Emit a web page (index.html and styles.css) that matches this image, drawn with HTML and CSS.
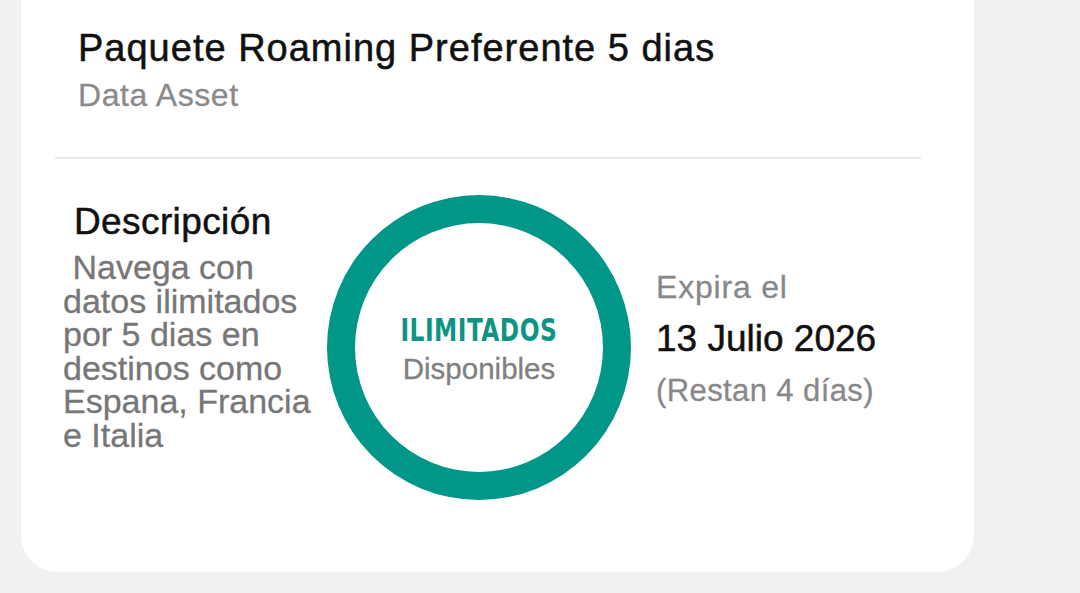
FILE: index.html
```html
<!DOCTYPE html>
<html lang="es">
<head>
<meta charset="utf-8">
<title>Paquete Roaming Preferente 5 dias</title>
<link rel="stylesheet" href="styles.css">
</head>
<body>
  <main class="card">
    <header class="head">
      <h1 class="title">Paquete Roaming Preferente 5 dias</h1>
      <p class="subtitle">Data Asset</p>
    </header>
    <hr class="divider">
    <section class="detail">
      <div class="desc">
        <h2 class="desc-title">Descripción</h2>
        <p class="desc-text">&nbsp;Navega con datos ilimitados por 5 dias en destinos como Espana, Francia e Italia</p>
      </div>
      <div class="ring">
        <span class="ring-value">ILIMITADOS</span>
        <span class="ring-label">Disponibles</span>
      </div>
      <div class="expiry">
        <p class="expiry-label">Expira el</p>
        <p class="expiry-date">13 Julio 2026</p>
        <p class="expiry-left">(Restan 4 días)</p>
      </div>
    </section>
  </main>
</body>
</html>
```
FILE: styles.css
```css
html, body {
  margin: 0;
  padding: 0;
}

body {
  background: #f1f1f1;
  font-family: "Liberation Sans", Arial, sans-serif;
  width: 1080px;
  height: 593px;
  overflow: hidden;
}

p, h1, h2 {
  margin: 0;
  font-weight: normal;
}

.card {
  margin-left: 21px;
  width: 953px;
  background: #ffffff;
  border-radius: 0 0 37px 37px;
  padding: 25px 0 72px;
  -webkit-text-stroke: 0.3px currentColor;
}

/* header */
.head {
  padding-left: 57px;
}

.title {
  font-size: 38px;
  line-height: 46px;
  letter-spacing: 1px;
  color: #111111;
  -webkit-text-stroke: 0.5px currentColor;
}

.subtitle {
  font-size: 32px;
  line-height: 48px;
  letter-spacing: 0.6px;
  color: #8a8a8a;
}

.divider {
  margin: 38px 0 0 34px;
  width: 866px;
  height: 2px;
  border: 0;
  background: #e8e8e8;
}

/* body row */
.detail {
  display: flex;
  align-items: flex-start;
  padding: 36px 0 0 42px;
}

.desc {
  width: 258px;
  margin-top: 5px;
}

.desc-title {
  font-size: 37px;
  line-height: 44px;
  letter-spacing: 0.4px;
  color: #111111;
  margin-left: 11px;
  -webkit-text-stroke: 0.5px currentColor;
}

.desc-text {
  margin-top: 7px;
  font-size: 34px;
  line-height: 33.6px;
  color: #777777;
}

.ring {
  box-sizing: border-box;
  width: 304px;
  height: 305px;
  margin-left: 6px;
  border: 28px solid #009688;
  border-radius: 50%;
  display: flex;
  flex-direction: column;
  align-items: center;
  justify-content: center;
  padding-top: 4px;
}

.ring-value {
  display: inline-block;
  font-family: "DejaVu Sans Condensed", "Liberation Sans Narrow", sans-serif;
  font-weight: bold;
  font-size: 32px;
  line-height: 38px;
  letter-spacing: 0.6px;
  color: #0e9384;
  transform: scaleX(0.81);
  -webkit-text-stroke: 0;
}

.ring-label {
  font-size: 29.5px;
  line-height: 40px;
  color: #808080;
}

.expiry {
  margin: 66px 0 0 25px;
}

.expiry p {
  line-height: 52px;
}

.expiry-label {
  font-size: 32px;
  letter-spacing: 0.8px;
  color: #888888;
}

.expiry-date {
  font-size: 37px;
  color: #111111;
  -webkit-text-stroke: 0.5px currentColor;
}

.expiry-left {
  font-size: 31px;
  letter-spacing: 0.4px;
  color: #888888;
}
```
